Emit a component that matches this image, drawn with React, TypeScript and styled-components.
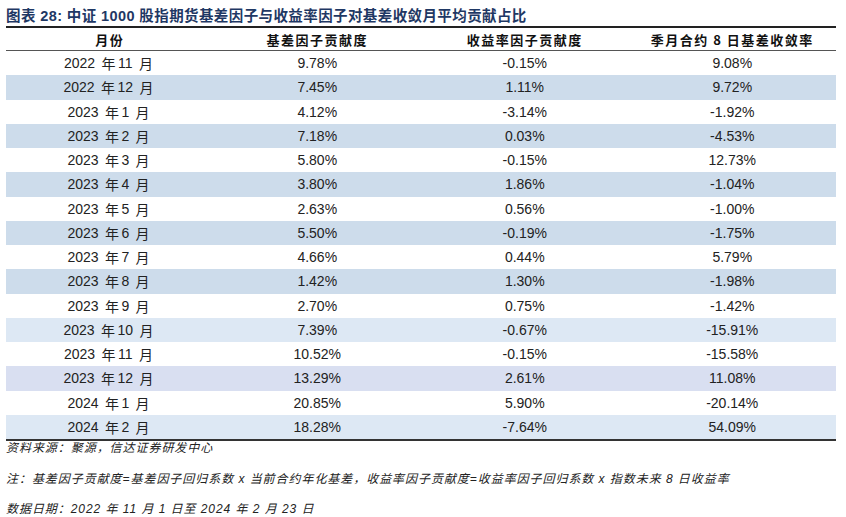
import React from "react";
import styled, { createGlobalStyle } from "styled-components";

const Global = createGlobalStyle`
  html, body { margin: 0; padding: 0; background: #ffffff; }
  body { font-family: "Liberation Sans", "Noto Sans CJK SC", sans-serif; }
`;

const Page = styled.div`
  width: 846px;
  height: 517px;
  padding: 6px 10px 0 6px;
  box-sizing: border-box;
  display: flex;
  flex-direction: column;
`;

const Title = styled.div`
  font-family: "Liberation Sans", "Noto Sans CJK SC", sans-serif;
  font-weight: 700;
  font-size: 14.5px;
  letter-spacing: 0.4px;
  line-height: 20px;
  color: #1f3864;
  height: 21px;
  white-space: nowrap;
`;

const Table = styled.div`
  display: grid;
  grid-template-columns: repeat(4, 1fr);
  border-top: 2px solid #222;
  border-bottom: 2px solid #333;
`;

const HeadCell = styled.div`
  font-family: "Noto Sans CJK SC", sans-serif;
  font-weight: 700;
  font-size: 13px;
  letter-spacing: 1.5px;
  color: #111;
  height: 22px;
  display: flex;
  align-items: center;
  justify-content: center;
  border-bottom: 1px solid #555;
`;

const Cell = styled.div<{ $bg: string }>`
  background: ${(p) => p.$bg};
  height: 24.25px;
  display: flex;
  align-items: center;
  justify-content: center;
  font-family: "Liberation Sans", "Noto Sans CJK SC", sans-serif;
  font-size: 14px;
  color: #222;
  white-space: pre;
`;

const Unit = styled.span`
  padding: 0 2.5px;
`;

const Notes = styled.div`
  display: flex;
  flex-direction: column;
  gap: 15.5px;
  padding-top: 0;
`;

const Note = styled.div`
  font-family: "Liberation Sans", "Noto Sans CJK SC", sans-serif;
  font-style: italic;
  font-size: 12px;
  letter-spacing: 0.95px;
  line-height: 15px;
  color: #222;
  white-space: nowrap;
`;

const rows: [string, string, string, string, string][] = [
  ["2022", "11", "9.78%", "-0.15%", "9.08%"],
  ["2022", "12", "7.45%", "1.11%", "9.72%"],
  ["2023", "1", "4.12%", "-3.14%", "-1.92%"],
  ["2023", "2", "7.18%", "0.03%", "-4.53%"],
  ["2023", "3", "5.80%", "-0.15%", "12.73%"],
  ["2023", "4", "3.80%", "1.86%", "-1.04%"],
  ["2023", "5", "2.63%", "0.56%", "-1.00%"],
  ["2023", "6", "5.50%", "-0.19%", "-1.75%"],
  ["2023", "7", "4.66%", "0.44%", "5.79%"],
  ["2023", "8", "1.42%", "1.30%", "-1.98%"],
  ["2023", "9", "2.70%", "0.75%", "-1.42%"],
  ["2023", "10", "7.39%", "-0.67%", "-15.91%"],
  ["2023", "11", "10.52%", "-0.15%", "-15.58%"],
  ["2023", "12", "13.29%", "2.61%", "11.08%"],
  ["2024", "1", "20.85%", "5.90%", "-20.14%"],
  ["2024", "2", "18.28%", "-7.64%", "54.09%"],
];

const bandFor = (i: number) => {
  if (i % 2 === 0) return "#ffffff";
  if (i === 11 || i === 15) return "#dde8f4";
  if (i === 13) return "#d9dff1";
  return "#cddceb";
};

const headers = ["月份", "基差因子贡献度", "收益率因子贡献度", "季月合约 8 日基差收敛率"];

export default function App() {
  return (
    <Page>
      <Global />
      <Title>图表 28:  中证 1000 股指期货基差因子与收益率因子对基差收敛月平均贡献占比</Title>
      <Table>
        {headers.map((h) => (
          <HeadCell key={h}>{h}</HeadCell>
        ))}
        {rows.map((r, i) => {
          const bg = bandFor(i);
          return (
            <React.Fragment key={i}>
              <Cell $bg={bg}>
                {r[0]} <Unit>年</Unit> {r[1]} <Unit>月</Unit>
              </Cell>
              <Cell $bg={bg}>{r[2]}</Cell>
              <Cell $bg={bg}>{r[3]}</Cell>
              <Cell $bg={bg}>{r[4]}</Cell>
            </React.Fragment>
          );
        })}
      </Table>
      <Notes>
        <Note>资料来源：聚源，信达证券研发中心</Note>
        <Note>注：基差因子贡献度=基差因子回归系数 x 当前合约年化基差，收益率因子贡献度=收益率因子回归系数 x 指数未来 8 日收益率</Note>
        <Note>数据日期：2022 年 11 月 1 日至 2024 年 2 月 23 日</Note>
      </Notes>
    </Page>
  );
}
